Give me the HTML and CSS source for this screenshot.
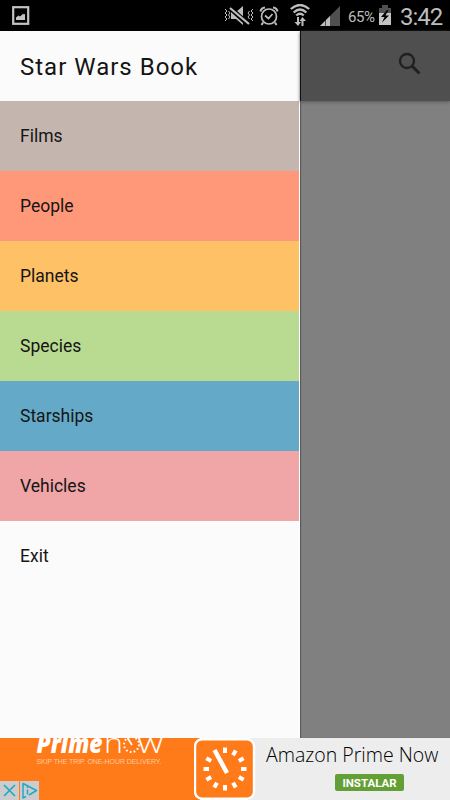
FILE: index.html
```html
<!DOCTYPE html>
<html lang="en">
<head>
  <meta charset="UTF-8" />
  <meta name="viewport" content="width=device-width, initial-scale=1.0"/>
  <title>Star Wars Book</title>
  <link rel="stylesheet" href="styles.css">
</head>
<body>

  <!-- Status bar -->
  <div class="status-bar">
    <svg class="icon-picture" width="18" height="20" viewBox="0 0 18 20">
      <rect x="1.2" y="1.2" width="15" height="16.6" fill="none" stroke="#c4c4c4" stroke-width="2.2"/>
      <path d="M4 14V11.5L6.5 9.5L8 10.5L11.5 7.5V8.5L13 8V14Z" fill="#c4c4c4"/>
    </svg>
    <div class="status-right">
      <svg class="icon-mute" width="30" height="20" viewBox="0 0 30 20">
        <path d="M7 6H12L19 0V19L12 13H7Z" fill="#bdbdbd"/>
        <path d="M5 1L25 19" stroke="#000" stroke-width="5"/>
        <path d="M6 2L25 18" stroke="#bdbdbd" stroke-width="2.200"/>
        <path d="M1 3L3 5L1 7L3 9L1 11L3 13L1 15M4.500 5L6 7L4.500 9L6 11L4.500 13M29 3L27 5L29 7L27 9L29 11L27 13L29 15M25.500 5L24 7L25.500 9L24 11L25.500 13" fill="none" stroke="#bdbdbd" stroke-width="1"/>
      </svg>
      <svg class="icon-alarm" width="20" height="20" viewBox="0 0 20 20" fill="none" stroke="#bdbdbd">
        <circle cx="10" cy="10.500" r="7.500" stroke-width="1.700"/>
        <path d="M1.500 5.500Q2 2 6 1.500M14 1.500Q18 2 18.500 5.500M4 16.500L2.500 19M16 16.500L17.500 19" stroke-width="2"/>
        <path d="M6 9.500L9.500 12.500L13.500 8" stroke-width="1.700"/>
      </svg>
      <svg class="icon-wifi" width="20" height="23" viewBox="0 0 20 23" fill="none" stroke="#bdbdbd">
        <path d="M.8 5Q10-3 19.200 5M3.600 8.500Q10 2.500 16.400 8.500M6.300 11.500Q10 8 13.700 11.500" stroke-width="2.300"/>
        <path d="M8 13V20M12.500 15V22" stroke-width="2"/>
        <path d="M4.500 18H11L8 22ZM9.500 17L12.500 13L16 17Z" fill="#bdbdbd" stroke="none"/>
      </svg>
      <svg class="icon-signal" width="20" height="20" viewBox="0 0 20 20">
        <path d="M0 20L20 0V20Z" fill="#505050"/>
        <path d="M0 20L5 15V20ZM6 20V14L10 10V20Z" fill="#bdbdbd"/>
      </svg>
      <span class="battery-level">65%</span>
      <svg class="icon-battery" width="14" height="20" viewBox="0 0 14 20">
        <path d="M4 0H10V3H13V8H1V3H4Z" fill="#505050"/>
        <path d="M1 8H13V20H1Z" fill="#c4c4c4"/>
        <path d="M9 5L3 12H6.500L4 17.500L11 10.500H7.500L10.500 5Z" fill="#000"/>
      </svg>
      <span class="clock">3:42</span>
    </div>
  </div>

  <div class="screen">
    <!-- Drawer -->
    <nav class="drawer">
      <h1 class="drawer-title">Star Wars Book</h1>
      <ul class="menu">
        <li class="films">Films</li>
        <li class="people">People</li>
        <li class="planets">Planets</li>
        <li class="species">Species</li>
        <li class="starships">Starships</li>
        <li class="vehicles">Vehicles</li>
        <li class="exit">Exit</li>
      </ul>
    </nav>

    <main class="content">
      <div class="toolbar">
        <svg width="24" height="24" viewBox="0 0 24 24" fill="none" stroke="#202020">
          <circle cx="9" cy="9" r="7" stroke-width="2.300"/>
          <path d="M14 14L21.500 21.500" stroke-width="3"/>
        </svg>
      </div>
    </main>
  </div>

  <!-- Ad banner -->
  <div class="ad">
    <div class="ad-brand">
      <svg class="ad-logo" width="194" height="62" viewBox="0 0 194 62">
        <text class="logo-prime" x="36.500" y="14.500" textLength="66" lengthAdjust="spacingAndGlyphs">Prime</text>
        <text class="logo-now" x="104" y="14.500" textLength="19" lengthAdjust="spacingAndGlyphs">n</text>
        <circle cx="131.500" cy="6.500" r="7.500" fill="none" stroke="#fff" stroke-width="2" stroke-dasharray="1.700 2.227"/>
        <path d="M127.500 0L132 7" stroke="#fff" stroke-width="1.800"/>
        <text class="logo-now" x="137.500" y="14.500" textLength="25.500" lengthAdjust="spacingAndGlyphs">w</text>
        <text class="logo-tagline" x="36.500" y="26.300" textLength="125" lengthAdjust="spacing">SKIP THE TRIP. ONE-HOUR DELIVERY.</text>
      </svg>
      <div class="ad-controls">
        <svg width="19" height="19" viewBox="0 0 19 19">
          <path d="M4 4L15 15M15 4L4 15" stroke="#20a9c7" stroke-width="1.700"/>
        </svg>
        <svg width="19" height="19" viewBox="0 0 19 19" fill="none" stroke="#20a9c7" stroke-width="1.500">
          <path d="M6 15.500L3 17V2.500L16.500 9.500L9 14" stroke-linejoin="round"/>
          <path d="M7.500 8.500V13.500M7.500 5.500V7"/>
        </svg>
      </div>
    </div>
    <svg class="ad-icon" width="62" height="62" viewBox="0 0 62 62">
      <rect x="1" y="1.300" width="59" height="59.400" rx="7" fill="#ff7a18" stroke="#fff" stroke-width="2.400"/>
      <g stroke="#fff" stroke-width="4" stroke-linecap="butt">
        <path id="tick" d="M31 9.500V15"/>
        <use href="#tick" transform="rotate(30 31 31)"/>
        <use href="#tick" transform="rotate(60 31 31)"/>
        <use href="#tick" transform="rotate(90 31 31)"/>
        <use href="#tick" transform="rotate(120 31 31)"/>
        <use href="#tick" transform="rotate(150 31 31)"/>
        <use href="#tick" transform="rotate(180 31 31)"/>
        <use href="#tick" transform="rotate(210 31 31)"/>
        <use href="#tick" transform="rotate(240 31 31)"/>
        <use href="#tick" transform="rotate(270 31 31)"/>
        <use href="#tick" transform="rotate(300 31 31)"/>
        <path d="M20.500 12L33 35" stroke-width="4.500"/>
      </g>
    </svg>
    <div class="ad-info">
      <div class="ad-title">Amazon Prime Now</div>
      <button class="install-btn">INSTALAR</button>
    </div>
  </div>

</body>
</html>
```
FILE: styles.css
```css
* {
  box-sizing: border-box;
}

body {
  margin: 0;
  width: 450px;
  height: 800px;
  display: flex;
  flex-direction: column;
  overflow: hidden;
  background: #808080;
  font-family: Roboto, sans-serif;
}

svg {
  display: block;
  flex-shrink: 0;
}

/* Status bar */
.status-bar {
  height: 31px;
  background: #000;
  color: #bdbdbd;
  display: flex;
  justify-content: space-between;
  padding: 6px 8px 0 12px;
}

.status-right {
  display: flex;
  align-items: flex-start;
}

.icon-alarm {
  margin-left: 5px;
}

.icon-wifi {
  margin: -2px 10px 0 11px;
}

.battery-level {
  width: 28px;
  margin: 0 2px 0 8px;
  font-size: 15px;
  line-height: 22px;
  letter-spacing: -0.4px;
  white-space: nowrap;
}

.clock {
  width: 42px;
  margin-left: 8px;
  font-size: 24px;
  line-height: 22px;
  letter-spacing: -1px;
}

.icon-battery {
  margin-top: -1px;
}

/* Drawer */
.screen {
  height: 707px;
  display: flex;
}

.drawer {
  width: 300px;
  background: #fbfbfb;
  color: #151515;
  border-right: 1px solid #fff;
}

.drawer-title {
  height: 70px;
  margin: 0;
  padding-left: 20px;
  font-size: 24px;
  font-weight: 400;
  line-height: 72px;
  letter-spacing: 1px;
}

.menu {
  margin: 0;
  padding: 0;
  list-style: none;
}

.menu li {
  height: 70px;
  padding-left: 20px;
  font-size: 17.5px;
  line-height: 70px;
}

.films {
  background: #c4b5af;
}

.people {
  background: #ff9879;
}

.planets {
  background: #ffc166;
}

.species {
  background: #b9db91;
}

.starships {
  background: #64aac8;
}

.vehicles {
  background: #f0a5a6;
}

.content {
  flex: 1;
  background: #808080;
  box-shadow: inset 1px 0 1px #555;
}

.toolbar {
  height: 70px;
  padding: 21px 28px 0 0;
  display: flex;
  justify-content: flex-end;
  background: #4f4f4f;
  box-shadow: inset 1px 0 #111, 0 1px 3px #555;
}

/* Ad banner */
.ad {
  height: 62px;
  display: flex;
  background: #ededed;
}

.ad-brand {
  position: relative;
  width: 200px;
  background: #ff7a18;
}

.logo-prime {
  font: italic 800 26px "Open Sans", sans-serif;
  fill: #fff;
}

.logo-now {
  font: 300 27px "Open Sans", sans-serif;
  fill: #fff;
}

.logo-tagline {
  font: 400 7px "Liberation Sans", sans-serif;
  fill: #ffc79b;
}

.ad-controls {
  position: absolute;
  left: 0;
  bottom: 0;
  display: flex;
  gap: 1px;
}

.ad-controls svg {
  background: #ccc;
}

.ad-icon {
  position: relative;
  margin-left: -6px;
}

.ad-info {
  flex: 1;
  padding-left: 10px;
}

.ad-title {
  height: 36px;
  color: #000;
  font: 300 19.5px "Open Sans", sans-serif;
  line-height: 33px;
  white-space: nowrap;
}

.install-btn {
  display: block;
  width: 69px;
  height: 17px;
  margin-left: 69px;
  padding: 0;
  border: none;
  border-radius: 2px;
  background: #649f36;
  color: #fff;
  font: 700 11.5px Roboto, sans-serif;
  line-height: 14px;
}
```
